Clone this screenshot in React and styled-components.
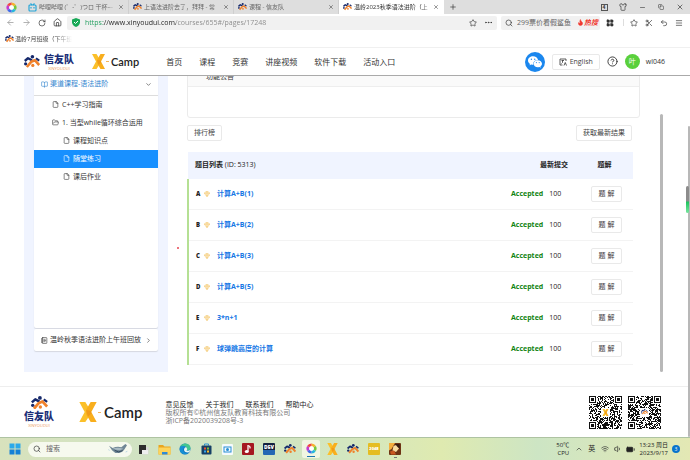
import React from 'react'
import styled, { createGlobalStyle } from 'styled-components'
import {
    ArrowLeft,
    ArrowRight,
    BatteryFull,
    BookOpen,
    ChevronDown,
    ChevronRight,
    ChevronUp,
    CircleHelp,
    Copy,
    Ellipsis,
    File,
    Flame,
    FolderOpen,
    Gem,
    House,
    LayoutGrid,
    Menu,
    Minus,
    NotebookText,
    Plus,
    RotateCw,
    Scissors,
    Search,
    Shirt,
    Star,
    Undo2,
    Volume1,
    Wifi,
    X,
} from 'lucide-react'
import { AiFillWechat } from 'react-icons/ai'

const GlobalStyle = createGlobalStyle`
  * {
    box-sizing: border-box;
  }
  body {
    margin: 0;
    background: #fff;
    color: #333;
    font-family: 'Open Sans', 'Noto Sans CJK SC', sans-serif;
    font-size: 7px;
    line-height: 10px;
  }
  button, input {
    font: inherit;
    color: inherit;
    border: 0;
    padding: 0;
    margin: 0;
    background: none;
  }
  a {
    color: inherit;
    text-decoration: none;
  }
  svg {
    display: block;
    flex: none;
  }
`

const Desktop = styled.div`
  display: flex;
  flex-direction: column;
  height: 100vh;
  overflow: hidden;
`

/* ---------- browser ---------- */

const TabStrip = styled.div`
  display: flex;
  align-items: center;
  height: 14px;
  flex: none;
  background: #dedede;
  padding-left: 6px;
`

const TabList = styled.div`
  display: flex;
  height: 100%;
  flex: 1;
  margin-left: 7px;
  align-items: center;
`

const Tab = styled.div`
  display: flex;
  align-items: center;
  gap: 2px;
  height: 100%;
  flex: 0 1 105px;
  min-width: 0;
  padding: 0 4px;
  font-size: 6px;
  background: ${({ $active }) => ($active ? '#fff' : 'transparent')};
  color: ${({ $active }) => ($active ? '#333' : '#666')};
  border-right: 1px solid ${({ $active }) => ($active ? '#fff' : '#cfcfcf')};
`

const TabTitle = styled.button`
  flex: 1;
  min-width: 0;
  overflow: hidden;
  white-space: nowrap;
  text-align: left;
  mask-image: linear-gradient(90deg, #000 88%, transparent);
`

const IconButton = styled.button`
  display: flex;
  align-items: center;
  justify-content: center;
  width: ${({ $w }) => $w || 8}px;
  height: 10px;
  flex: none;
  color: ${({ $muted }) => ($muted ? '#999' : '#333')};
`

const WindowControls = styled.div`
  display: flex;
  gap: 7px;
  padding-right: 4px;
`

const TabCount = styled.span`
  border: 1px solid #555;
  width: 7px;
  height: 7px;
  font-size: 5px;
  line-height: 5px;
  font-weight: 700;
`

const Toolbar = styled.div`
  display: flex;
  align-items: center;
  height: 17px;
  flex: none;
  padding: 0 6px 0 5px;
`

const ToolGroup = styled.div`
  display: flex;
  align-items: center;
  gap: 4px;
`

const AddressField = styled.div`
  display: flex;
  align-items: center;
  gap: 5px;
  flex: 1;
  min-width: 0;
  height: 14px;
  margin: 0 4px;
  padding: 0 3px 0 5px;
  background: #f1f1f1;
  border-radius: 2px;
`

const AddressInput = styled.input`
  flex: 1;
  min-width: 0;
  color: transparent;
  background: linear-gradient(90deg, #1c9c5a 18px, #222 18px, #222 91px, #888 91px);
  background-clip: text;
`

const SearchField = styled.div`
  display: flex;
  align-items: center;
  gap: 4px;
  width: 99px;
  flex: none;
  height: 14px;
  padding: 0 2px 0 4px;
  background: #f1f1f1;
  border-radius: 2px;
`

const SearchInput = styled.input`
  flex: 1;
  min-width: 0;
  width: 100%;
  &::placeholder {
    color: #666;
    opacity: 1;
  }
`

const Hot = styled.span`
  display: flex;
  align-items: center;
  color: #f0382f;
  font-weight: 700;
  font-style: italic;
  white-space: nowrap;
`

const Divider = styled.span`
  width: 1px;
  height: 7px;
  background: #ddd;
`

const Bookmarks = styled.div`
  display: flex;
  align-items: center;
  height: 16px;
  flex: none;
  padding-left: 5px;
`

const Bookmark = styled.a`
  display: flex;
  gap: 1px;
  align-items: center;
  overflow: hidden;
  white-space: nowrap;
  font-size: 6px;
  color: #444;
  mask-image: linear-gradient(90deg, #000 75%, transparent);
`

/* ---------- site ---------- */

const SiteHeader = styled.header`
  display: flex;
  align-items: center;
  height: 29px;
  flex: none;
  padding: 0 25px 0 24px;
  border-top: 1px solid #f0f0f0;
  border-bottom: 1px solid #aaa;
`

const Brand = styled.a`
  display: flex;
  flex-direction: ${({ $stacked }) => ($stacked ? 'column' : 'row')};
  align-items: center;
  gap: ${({ $stacked }) => ($stacked ? 0 : 4)}px;
`

const BrandName = styled.span`
  display: flex;
  flex-direction: column;
  align-items: center;
  color: #1b2f78;
  font-family: 'Noto Sans CJK SC', sans-serif;
  font-size: 10px;
  font-weight: 900;
  line-height: 14px;
`

const BrandLatin = styled.small`
  color: #ec9a5c;
  font-family: 'Open Sans', sans-serif;
  font-size: 4px;
  font-weight: 400;
  line-height: 5px;
`

const CampBrand = styled.a`
  display: flex;
  align-items: center;
  gap: 1px;
  color: #222;
  font-family: Lato, sans-serif;
  font-weight: 600;
  font-size: ${({ $large }) => ($large ? 15 : 11)}px;
  line-height: 20px;
  margin-left: ${({ $large }) => ($large ? 25 : 18)}px;
`

const Dash = styled.span`
  width: 3px;
  height: 1px;
  background: #f3b45c;
  margin-right: ${({ $end }) => $end || 1}px;
`

const Nav = styled.nav`
  display: flex;
  gap: 17px;
  margin-left: 27px;
  font-size: 8px;
  white-space: nowrap;
`

const HeaderTools = styled.div`
  display: flex;
  align-items: center;
  margin-left: auto;
  gap: 7px;
`

const Round = styled.button`
  display: flex;
  align-items: center;
  justify-content: center;
  width: ${({ $size }) => $size}px;
  height: ${({ $size }) => $size}px;
  border-radius: 50%;
  color: #fff;
  background: ${({ $bg }) => $bg};
`

const Outlined = styled.button`
  display: flex;
  align-items: center;
  justify-content: center;
  gap: 3px;
  height: 16px;
  padding: 0 6px;
  border: 1px solid #e9e9e9;
  border-radius: 2px;
  color: #444;
  white-space: nowrap;
`

const User = styled.div`
  display: flex;
  align-items: center;
  gap: 6px;
`

const Viewport = styled.div`
  position: relative;
  display: flex;
  flex: 1;
  min-height: 0;
  overflow: hidden;
`

/* The page is scrolled to its end, so it is held to the bottom edge */
const Page = styled.div`
  display: flex;
  flex-direction: column;
  justify-content: flex-end;
  flex: 1;
  min-width: 0;
`

const Course = styled.div`
  display: flex;
  flex: none;
  padding: 0 25px 0 24px;
  margin-bottom: 14px;
`

const Sidebar = styled.aside`
  display: flex;
  flex-direction: column;
  gap: 1px;
  width: 144px;
  flex: none;
  padding: 7px 10px 21px;
  background: #f0f4ff;
`

const Panel = styled.section`
  flex: ${({ $grow }) => ($grow ? 1 : 'none')};
  background: #fff;
  border-radius: 2px;
  box-shadow: 0 1px 1px #d5d8e0;
`

const PanelHead = styled.button`
  display: flex;
  align-items: center;
  gap: 2px;
  width: 100%;
  height: 22px;
  padding: 0 6px 0 7px;
  text-align: left;
  color: ${({ $open }) => ($open ? '#3486cf' : '#333')};
  border-bottom: ${({ $open }) => ($open ? '1px solid #ddd' : '0')};
  span {
    flex: 1;
  }
  svg:last-child {
    color: #333;
  }
`

const TreeItem = styled.a`
  display: flex;
  align-items: center;
  gap: 3px;
  height: 18px;
  padding-left: ${({ $depth }) => ($depth === 2 ? 29 : 18)}px;
  white-space: nowrap;
  color: ${({ $selected }) => ($selected ? '#fff' : '#333')};
  background: ${({ $selected }) => ($selected ? '#1890ff' : 'none')};
`

const Main = styled.main`
  flex: 1;
  min-width: 0;
  padding: 0 20px 7px 0;
  margin-left: 19px;
`

const Notice = styled.section`
  border: 1px solid #ebebeb;
  border-radius: 3px;
`

const NoticeHead = styled.div`
  height: 19px;
  padding: 4px 18px;
  background: #fafafa;
  border-bottom: 1px solid #eee;
`

const NoticeBody = styled.div`
  height: 30px;
`

const Actions = styled.div`
  display: flex;
  justify-content: space-between;
  margin: 7px 8px 11px 0;
`

const Problems = styled.div`
  margin-right: 7px;
`

const Table = styled.table`
  width: 100%;
  border-collapse: collapse;
  table-layout: fixed;
`

const Th = styled.th`
  width: ${({ $w }) => ($w ? `${$w}px` : 'auto')};
  height: 27px;
  padding: 0 ${({ $end }) => ($end || 0)}px 0 ${({ $first }) => ($first ? 7 : 0)}px;
  text-align: ${({ $align }) => $align || 'left'};
  background: #f0f4ff;
  color: #222;
  small {
    font-size: 7px;
    font-weight: 500;
  }
`

const Row = styled.tr`
  height: 31px;
  td {
    padding: 0;
    border-bottom: 1px solid #f3f3f3;
  }
  td:first-child {
    border-left: 2px solid #b5e094;
  }
`

const Problem = styled.div`
  display: flex;
  align-items: center;
  padding-left: 7px;
  font-weight: 700;
  b {
    width: 8px;
    font-size: 6px;
    color: #222;
  }
  svg {
    color: #f0ba4e;
  }
  a {
    margin-left: 7px;
    color: #1677e5;
  }
`

const Result = styled.div`
  display: flex;
  gap: 6px;
  color: #222;
  strong {
    font-weight: 700;
    color: #128312;
  }
`

const Explain = styled(Outlined)`
  width: 31px;
  margin-left: 15px;
`

const Thumb = styled.div`
  width: ${({ $w }) => $w}px;
  flex: none;
  margin-top: ${({ $top }) => $top}px;
  border-radius: 2px;
  background: #b8b8b8;
`

const Meter = styled.div`
  position: absolute;
  right: 1px;
  top: 110px;
  width: 3px;
  height: 27px;
  border-radius: 2px;
  background: linear-gradient(#8c8c8c 55%, #1fc45f 60%, #7ae6a0);
`

const PointerDot = styled.div`
  position: absolute;
  left: 177px;
  top: 171px;
  width: 2px;
  height: 2px;
  border-radius: 50%;
  background: #e64550;
`

const Footer = styled.footer`
  display: flex;
  align-items: center;
  flex: none;
  height: 51px;
  padding: 0 27px 0 24px;
  border-top: 1px solid #eee;
`

const FooterText = styled.div`
  margin-left: 23px;
  padding-top: 2px;
  line-height: 8px;
  color: #777;
  p {
    margin: 0;
  }
`

const FooterLinks = styled.div`
  display: flex;
  gap: 12px;
  color: #222;
`

const Codes = styled.div`
  display: flex;
  gap: 6px;
  margin-left: auto;
`

/* ---------- taskbar ---------- */

const Taskbar = styled.div`
  display: flex;
  align-items: center;
  flex: none;
  height: 23px;
  padding: 0 10px 0 6px;
  border-top: 1px solid #aec3a2;
  background: linear-gradient(90deg, #d8e2bd, #cfe3c4 25%, #d3e6c0 50%, #dfeab0 64%, #cde5c4 78%, #e3e8b4);
`

const SearchPill = styled.label`
  display: flex;
  align-items: center;
  gap: 5px;
  width: 104px;
  height: 15px;
  margin: 0 2px 0 4px;
  padding: 0 4px 0 5px;
  border-radius: 8px;
  background: #f6f9ee;
`

const Apps = styled.div`
  display: flex;
  gap: 3px;
`

const AppButton = styled.button`
  display: flex;
  align-items: center;
  justify-content: center;
  width: 18px;
  height: 18px;
  border-radius: 2px;
  background: ${({ $active }) => ($active ? '#f1f6e2' : 'none')};
`

const Running = styled.span`
  display: flex;
  flex-direction: column;
  align-items: center;
  gap: 2px;
  padding-top: 2px;
  &::after {
    content: '';
    width: ${({ $wide }) => ($wide ? 8 : 3)}px;
    height: 1px;
    background: ${({ $wide }) => ($wide ? '#1c76b0' : '#777')};
  }
`

const Tile = styled.span`
  width: 12px;
  height: 12px;
  border-radius: 1px;
  color: #fff;
  background: ${({ $bg }) => $bg};
  font-size: ${({ $size }) => $size || 4}px;
  font-weight: 800;
  line-height: ${({ $line }) => $line || 12}px;
  text-align: center;
`

const Tray = styled.div`
  display: flex;
  align-items: center;
  gap: 4px;
  margin-left: auto;
  color: #222;
`

const TwoLines = styled.div`
  text-align: right;
  font-size: 6px;
  line-height: 8px;
  white-space: nowrap;
`

const Badge = styled.span`
  width: 8px;
  height: 8px;
  border-radius: 50%;
  background: #0873cc;
  color: #fff;
  font-size: 5px;
  line-height: 8px;
  text-align: center;
`

const Mark = ({ size = 9 }) => (
    <svg width={size} height={size * 0.8} viewBox="0 0 40 32" fill="none">
        <circle cx="21" cy="4.5" r="4.5" fill="#15286b" />
        <path d="M2 15 L10 8 L20 13" stroke="#15286b" strokeWidth="6" strokeLinejoin="round" />
        <circle cx="4" cy="22" r="4" fill="#15286b" />
        <path d="M7 30 L18 17 L27 13 L38 25" stroke="#f0812b" strokeWidth="6.500" strokeLinejoin="round" />
        <path d="M30 8 L38 14" stroke="#15286b" strokeWidth="5" />
        <circle cx="22" cy="26" r="4" fill="#f0812b" />
    </svg>
)

const XMark = ({ width = 13, height = 15 }) => (
    <svg width={width} height={height} viewBox="0 0 26 30">
        <path d="M0 0 H9 L17 13 V18 L9 30 H0 L8 15 Z" fill="#fbc02a" />
        <path d="M17 0 H26 L18 15 L26 30 H17 L10 18 V12 Z" fill="#f8ae1d" />
        <path d="M10 12 L17 13 L18 17 L13 22 Z" fill="#f09a1a" />
    </svg>
)

const Wheel = ({ size = 11 }) => (
    <svg width={size} height={size} viewBox="0 0 24 24" fill="none" strokeWidth="6">
        <path d="M12 4 A8 8 0 0 1 19 8" stroke="#f6b32c" />
        <path d="M19 8 A8 8 0 0 1 19 16" stroke="#77c83d" />
        <path d="M19 16 A8 8 0 0 1 12 20" stroke="#27b8dc" />
        <path d="M12 20 A8 8 0 0 1 5 16" stroke="#426be8" />
        <path d="M5 16 A8 8 0 0 1 5 8" stroke="#c43bd2" />
        <path d="M5 8 A8 8 0 0 1 12 4" stroke="#f2443f" />
        <circle cx="12" cy="12" r="5" fill="#fff" />
    </svg>
)

const VideoLogo = () => (
    <svg width="9" height="9" viewBox="0 0 18 18" fill="none" stroke="#27a6d8" strokeWidth="2.4">
        <rect x="2" y="4" width="14" height="12" rx="2" />
        <path d="M5 1 L8 4 M13 1 L10 4 M6 8 V11 M12 8 V11" />
    </svg>
)

const Shield = () => (
    <svg width="8" height="9" viewBox="0 0 16 18">
        <path d="M8 0 L16 3 V9 Q15 15 8 18 Q1 15 0 9 V3 Z" fill="#18a957" />
        <path d="M4 8 L7 11 L12 6" fill="none" stroke="#fff" strokeWidth="2" />
    </svg>
)

const Translate = () => (
    <svg width="8" height="8" viewBox="0 0 16 16" fill="none" stroke="#333" strokeWidth="1.6">
        <path d="M14 6 V2 H2 V14 H7 M5 5 H10 M7 5 V9 M5 11 L7 9 M10 15 L12.500 9 L15 15" />
    </svg>
)

const WindowsLogo = () => (
    <svg width="12" height="12" viewBox="0 0 24 24">
        <path d="M1 1 H11 V11 H1 Z M13 1 H23 V11 H13 Z" fill="#2aa9ea" />
        <path d="M1 13 H11 V23 H1 Z M13 13 H23 V23 H13 Z" fill="#1580d6" />
    </svg>
)

const Whale = () => (
    <svg width="20" height="12" viewBox="0 0 60 36">
        <path d="M3 8 L14 15 Q28 9 40 13 L52 3 L57 7 L48 21 Q40 32 22 30 L12 22 Z" fill="#718796" />
        <path d="M14 16 Q30 12 46 17 L36 22 L23 20 Z" fill="#a9bac3" />
        <path d="M20 22 Q31 31 44 23" fill="none" stroke="#354c60" strokeWidth="3" />
        <path d="M1 20 L5 22 M53 27 L58 25" stroke="#9cc4dc" strokeWidth="2" />
    </svg>
)

const TaskView = () => (
    <svg width="11" height="11" viewBox="0 0 22 22">
        <rect x="7" y="6" width="14" height="15" fill="#d7d7d7" />
        <path d="M2 2 H16 V14 H8 V20 H2 Z" fill="#2c2c2c" />
        <rect x="8" y="12" width="12" height="8" fill="#eee" />
    </svg>
)

const Folder = () => (
    <svg width="13" height="11" viewBox="0 0 26 22">
        <path d="M1 2 H10 L13 5 H25 V21 H1 Z" fill="#e9a51f" />
        <rect x="1" y="7" width="24" height="14" rx="1" fill="#fdd45b" />
        <path d="M8 16 H19 V21 H8 Z" fill="#2f8bd8" />
    </svg>
)

const Edge = () => (
    <svg width="12" height="12" viewBox="0 0 24 24">
        <circle cx="12" cy="12" r="11" fill="#1474bf" />
        <path d="M2 9 Q5 1 13 1 Q23 2 23 11 Q22 16 15 15 Q18 8 11 7 Q5 6 2 9 Z" fill="#43c78f" />
        <path d="M2 9 Q7 3 14 8 Q8 8 8 15 Q10 21 18 20 Q12 25 5 20 Q0 16 2 9 Z" fill="#168fd4" />
        <path d="M14 8 Q18 12 15 15 Q19 17 23 13 Q22 18 18 19 Q10 19 10 13 Q10 9 14 8 Z" fill="#e8f7f5" />
    </svg>
)

const Store = () => (
    <svg width="11" height="12" viewBox="0 0 22 24">
        <path d="M7 5 V2 H15 V5" fill="none" stroke="#2a8fd0" strokeWidth="2" />
        <rect x="1" y="5" width="20" height="18" rx="2" fill="#163f66" />
        <path d="M6 9 H10 V13 H6 Z" fill="#ef5133" />
        <path d="M12 9 H16 V13 H12 Z" fill="#81bc3b" />
        <path d="M6 15 H10 V19 H6 Z" fill="#35a5e9" />
        <path d="M12 15 H16 V19 H12 Z" fill="#fbbd2c" />
    </svg>
)

const Capture = () => (
    <svg width="11" height="11" viewBox="0 0 22 22">
        <rect width="22" height="22" rx="2" fill="#f5fafc" />
        <rect x="4" y="6" width="14" height="10" fill="none" stroke="#268ed6" strokeWidth="2" />
        <circle cx="11" cy="11" r="3" fill="#268ed6" />
    </svg>
)

const MusicNote = () => (
    <svg width="12" height="12" viewBox="0 0 24 24">
        <rect width="24" height="24" rx="2" fill="#a51720" />
        <path d="M12 4 V17 M12 5 Q17 6 16 11" fill="none" stroke="#fff" strokeWidth="2.500" />
        <ellipse cx="9.500" cy="17" rx="4" ry="3" fill="#fff" />
    </svg>
)

const Game = () => (
    <svg width="12" height="12" viewBox="0 0 24 24">
        <rect width="24" height="24" rx="2" fill="#6d3415" />
        <path d="M0 0 H12 L5 12 L0 15 Z" fill="#f4ae3e" />
        <path d="M9 6 L17 3 L20 11 L14 18 L7 15 Z" fill="#f7dba0" />
        <path d="M12 2 L21 2 L22 12 L17 8 Z" fill="#351b12" />
        <path d="M2 17 L10 15 L14 23 H4 Z" fill="#c9571f" />
    </svg>
)

const QR_SIZE = 33

const isFinder = (x, y) => {
    const far = QR_SIZE - 8
    return (x < 8 && y < 8) || (x >= far && y < 8) || (x < 8 && y >= far)
}

const QrCode = ({ seed, label, children }) => {
    let value = seed
    let d = ''
    for (let y = 0; y < QR_SIZE; y++) {
        for (let x = 0; x < QR_SIZE; x++) {
            value = (value * 16807) % 2147483647
            if (!isFinder(x, y) && value / 2147483647 > 0.46) {
                d += `M${x} ${y}h1v1h-1z`
            }
        }
    }
    const corners = [[0, 0], [QR_SIZE - 7, 0], [0, QR_SIZE - 7]]
    return (
        <svg width="33" height="33" viewBox={`0 0 ${QR_SIZE} ${QR_SIZE}`} role="img" aria-label={label}>
            <path d={d} fill="#111" />
            {corners.map(([x, y]) => (
                <g key={`${x}-${y}`}>
                    <rect x={x + 0.5} y={y + 0.5} width="6" height="6" fill="none" stroke="#111" />
                    <rect x={x + 2} y={y + 2} width="3" height="3" fill="#111" />
                </g>
            ))}
            <rect x="12" y="12" width="9" height="9" fill="#fff" />
            <svg x="13" y="13" width="7" height="7">{children}</svg>
        </svg>
    )
}

const tabs = [
    { title: '哔哩哔哩 (゜-゜)つロ 干杯~-', icon: <VideoLogo /> },
    { title: '上语法进阶去了，拜拜 - 常', icon: <Mark /> },
    { title: '课程 - 信友队', icon: <Mark /> },
    { title: '温岭2023秋季语法进阶（上', icon: <Mark />, active: true },
]

const navItems = ['首页', '课程', '竞赛', '讲座视频', '软件下载', '活动入口']

const tree = [
    { label: 'C++学习指南', depth: 1 },
    { label: '1. 当型while循环综合运用', depth: 1, folder: true },
    { label: '课程知识点', depth: 2 },
    { label: '随堂练习', depth: 2, selected: true },
    { label: '课后作业', depth: 2 },
]

const problems = [
    { id: 'A', name: '计算A+B(1)' },
    { id: 'B', name: '计算A+B(2)' },
    { id: 'C', name: '计算A+B(3)' },
    { id: 'D', name: '计算A+B(5)' },
    { id: 'E', name: '3*n+1' },
    { id: 'F', name: '球弹跳高度的计算' },
]

const apps = [
    { name: '任务视图', icon: <TaskView /> },
    { name: '文件资源管理器', icon: <Folder /> },
    { name: 'Edge', icon: <Edge /> },
    { name: 'Store', icon: <Store /> },
    { name: '截图', icon: <Capture /> },
    { name: '音乐', icon: <MusicNote /> },
    { name: 'Dev-C++', icon: <Tile $bg="linear-gradient(#14213f 60%, #2467b4 60%)" $size={5} $line={8}>DEV</Tile> },
    { name: '信友队', icon: <Mark size={12} /> },
    { name: '浏览器', icon: <Running $wide><Wheel /></Running>, active: true },
    { name: 'X-Camp', icon: <XMark width={11} height={12} /> },
    { name: '信友队客户端', icon: <Mark size={12} /> },
    { name: '2048', icon: <Tile $bg="#e5bd22">2048</Tile> },
    { name: '游戏', icon: <Running><Game /></Running> },
]

const Browser = () => (
    <>
        <TabStrip>
            <Wheel />
            <TabList>
                {tabs.map((tab) => (
                    <Tab key={tab.title} $active={tab.active}>
                        {tab.icon}
                        <TabTitle>{tab.title}</TabTitle>
                        <IconButton $w={6} aria-label="关闭标签页"><X size={6} /></IconButton>
                    </Tab>
                ))}
                <IconButton $w={18} aria-label="新标签页"><Plus size={8} /></IconButton>
            </TabList>
            <WindowControls>
                <IconButton $w={12} aria-label="标签数"><TabCount>4</TabCount></IconButton>
                <IconButton $w={12} aria-label="皮肤"><Shirt size={8} /></IconButton>
                <IconButton $w={12} aria-label="最小化"><Minus size={7} /></IconButton>
                <IconButton $w={12} aria-label="还原"><Copy size={6} /></IconButton>
                <IconButton $w={12} aria-label="关闭"><X size={8} /></IconButton>
            </WindowControls>
        </TabStrip>
        <Toolbar>
            <ToolGroup>
                <IconButton $w={11} $muted aria-label="后退"><ArrowLeft size={9} /></IconButton>
                <IconButton $w={12} $muted aria-label="前进"><ArrowRight size={9} /></IconButton>
                <IconButton $w={12} aria-label="刷新"><RotateCw size={8} /></IconButton>
                <IconButton $w={11} aria-label="主页"><House size={9} /></IconButton>
            </ToolGroup>
            <AddressField>
                <Shield />
                <AddressInput aria-label="地址" defaultValue="https://www.xinyoudui.com/courses/655#/pages/17248" />
                <IconButton $w={11} aria-label="收藏"><Star size={8} /></IconButton>
                <IconButton $w={11} aria-label="更多"><Ellipsis size={9} /></IconButton>
            </AddressField>
            <SearchField>
                <Search size={8} />
                <SearchInput aria-label="搜索" placeholder="299票价看假鲨鱼" />
                <Hot><Flame size={7} fill="currentColor" />热搜</Hot>
            </SearchField>
            <ToolGroup>
                <IconButton $w={19} aria-label="应用"><LayoutGrid size={8} fill="currentColor" /></IconButton>
                <Divider />
                <IconButton $w={11} aria-label="收藏夹"><Star size={8} /></IconButton>
                <IconButton $w={11} aria-label="截图"><Scissors size={8} /></IconButton>
                <IconButton $w={11} aria-label="恢复"><Undo2 size={8} /></IconButton>
                <IconButton $w={11} aria-label="菜单"><Menu size={8} /></IconButton>
            </ToolGroup>
        </Toolbar>
        <Bookmarks>
            <Bookmark href="#"><Mark />温岭7月班级（下午班</Bookmark>
        </Bookmarks>
    </>
)

const Header = () => (
    <SiteHeader>
        <Brand href="#">
            <Mark size={16} />
            <BrandName>信友队<BrandLatin>XINYOUDUI</BrandLatin></BrandName>
        </Brand>
        <CampBrand href="#"><XMark /><Dash />Camp</CampBrand>
        <Nav>
            {navItems.map((item) => <a key={item} href="#">{item}</a>)}
        </Nav>
        <HeaderTools>
            <Round $size={20} $bg="#1b87ee" aria-label="微信"><AiFillWechat size={16} /></Round>
            <Outlined><Translate />English</Outlined>
            <IconButton $w={11} aria-label="帮助"><CircleHelp size={11} /></IconButton>
            <User>
                <Round $size={15} $bg="#5ad03c">叶</Round>
                wl046
            </User>
        </HeaderTools>
    </SiteHeader>
)

const CourseMenu = () => (
    <Sidebar>
        <Panel $grow>
            <PanelHead $open>
                <BookOpen size={7} />
                <span>渠道课程-语法进阶</span>
                <ChevronDown size={7} />
            </PanelHead>
            {tree.map((item) => (
                <TreeItem key={item.label} href="#" $depth={item.depth} $selected={item.selected}>
                    {item.folder ? <FolderOpen size={7} /> : <File size={7} />}
                    {item.label}
                </TreeItem>
            ))}
        </Panel>
        <Panel>
            <PanelHead>
                <NotebookText size={7} />
                <span>温岭秋季语法进阶上午班回放</span>
                <ChevronRight size={7} />
            </PanelHead>
        </Panel>
    </Sidebar>
)

const ProblemTable = () => (
    <Problems>
        <Table>
            <thead>
                <tr>
                    <Th $first>题目列表 <small>(ID: 5313)</small></Th>
                    <Th $w={65} $end={8} $align="right">最新提交</Th>
                    <Th $w={57} $align="center">题解</Th>
                </tr>
            </thead>
            <tbody>
                {problems.map((problem) => (
                    <Row key={problem.id}>
                        <td>
                            <Problem>
                                <b>{problem.id}</b>
                                <Gem size={6} />
                                <a href="#">{problem.name}</a>
                            </Problem>
                        </td>
                        <td><Result><strong>Accepted</strong>100</Result></td>
                        <td><Explain>题 解</Explain></td>
                    </Row>
                ))}
            </tbody>
        </Table>
    </Problems>
)

const SiteFooter = () => (
    <Footer>
        <Brand href="#" $stacked>
            <Mark size={17} />
            <BrandName>信友队<BrandLatin>XINYOUDUI</BrandLatin></BrandName>
        </Brand>
        <CampBrand href="#" $large><XMark width={18} height={20} /><Dash $end={2} />Camp</CampBrand>
        <FooterText>
            <FooterLinks>
                <a href="#">意见反馈</a>
                <a href="#">关于我们</a>
                <a href="#">联系我们</a>
                <a href="#">帮助中心</a>
            </FooterLinks>
            <p>版权所有©杭州信友队教育科技有限公司</p>
            <p>浙ICP备2020039208号-3</p>
        </FooterText>
        <Codes>
            <QrCode seed={4127} label="X-Camp"><XMark width={7} height={7} /></QrCode>
            <QrCode seed={90211} label="信友队"><Mark size={7} /></QrCode>
        </Codes>
    </Footer>
)

const SystemBar = () => (
    <Taskbar>
        <AppButton aria-label="开始"><WindowsLogo /></AppButton>
        <SearchPill>
            <Search size={8} />
            <SearchInput aria-label="搜索" placeholder="搜索" />
            <Whale />
        </SearchPill>
        <Apps>
            {apps.map((app) => (
                <AppButton key={app.name} aria-label={app.name} $active={app.active}>{app.icon}</AppButton>
            ))}
        </Apps>
        <Tray>
            <TwoLines>50℃<br />CPU</TwoLines>
            <IconButton $w={11} aria-label="显示隐藏的图标"><ChevronUp size={8} /></IconButton>
            <span>英</span>
            <IconButton $w={11} aria-label="网络"><Wifi size={8} /></IconButton>
            <Volume1 size={8} />
            <BatteryFull size={9} fill="currentColor" />
            <TwoLines>13:23 周日<br />2023/9/17</TwoLines>
            <Badge>3</Badge>
        </Tray>
    </Taskbar>
)

const App = () => {
    return (
        <Desktop>
            <GlobalStyle />
            <Browser />
            <Header />
            <Viewport>
                <Page>
                    <Course>
                        <CourseMenu />
                        <Main>
                            <Notice>
                                <NoticeHead>功能公告</NoticeHead>
                                <NoticeBody />
                            </Notice>
                            <Actions>
                                <Outlined>排行榜</Outlined>
                                <Outlined>获取最新结果</Outlined>
                            </Actions>
                            <ProblemTable />
                        </Main>
                        <Thumb $w={3} $top={47} />
                    </Course>
                    <SiteFooter />
                </Page>
                <Thumb $w={2} $top={50} />
                <Meter />
                <PointerDot />
            </Viewport>
            <SystemBar />
        </Desktop>
    )
}

export default App
